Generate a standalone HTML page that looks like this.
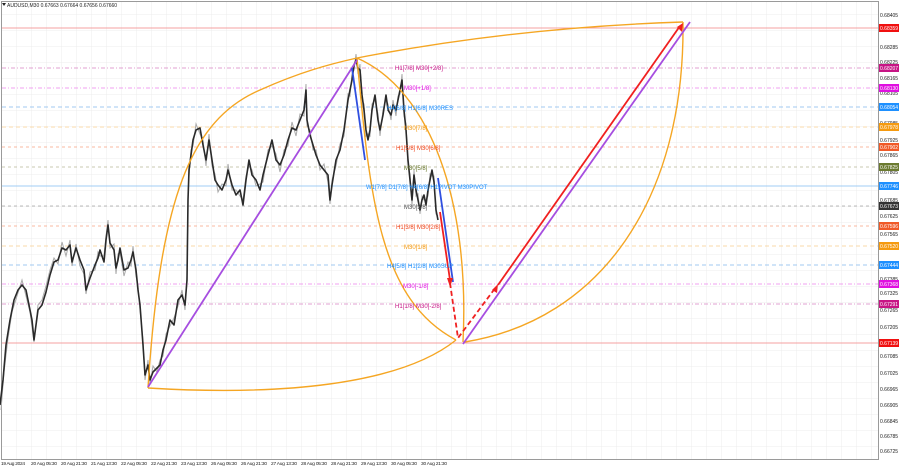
<!DOCTYPE html>
<html><head><meta charset="utf-8"><style>
body{margin:0;width:900px;height:468px;background:#fff;overflow:hidden;font-family:"Liberation Sans",sans-serif}
svg{position:absolute;left:0;top:0}
</style></head><body>
<svg width="900" height="468" viewBox="0 0 900 468" font-family="Liberation Sans, sans-serif">
<defs>
<pattern id="g" x="2" y="-1" width="15" height="16" patternUnits="userSpaceOnUse">
<path d="M15 0V16M0 16H15" stroke="#ececec" stroke-width="1" fill="none"/>
</pattern>
</defs>
<rect x="2" y="2" width="876" height="457" fill="url(#g)"/>
<rect x="1.5" y="1.5" width="877" height="458" fill="none" stroke="#9a9a9a"/>
<g stroke-width="1" fill="none">
<line x1="2" y1="28" x2="878" y2="28" stroke="#f5a0a0"/>
<line x1="2" y1="68" x2="878" y2="68" stroke="#e0a0d0" stroke-dasharray="4 2 1 2"/>
<line x1="2" y1="88" x2="878" y2="88" stroke="#f0a0f0" stroke-dasharray="4 2 1 2"/>
<line x1="2" y1="107" x2="878" y2="107" stroke="#a0c8f0" stroke-dasharray="4 3"/>
<line x1="2" y1="127" x2="878" y2="127" stroke="#f8d8a8" stroke-dasharray="4 3"/>
<line x1="2" y1="147" x2="878" y2="147" stroke="#f8b8a0" stroke-dasharray="3 3"/>
<line x1="2" y1="167" x2="878" y2="167" stroke="#c8c8b0" stroke-dasharray="3 3"/>
<line x1="2" y1="186" x2="878" y2="186" stroke="#a0ccf4"/>
<line x1="2" y1="206" x2="878" y2="206" stroke="#bbbbbb" stroke-dasharray="3 3"/>
<line x1="2" y1="226" x2="878" y2="226" stroke="#f8b8a0" stroke-dasharray="3 3"/>
<line x1="2" y1="246" x2="878" y2="246" stroke="#f8d8a8" stroke-dasharray="4 3"/>
<line x1="2" y1="265" x2="878" y2="265" stroke="#a0c8f0" stroke-dasharray="4 3"/>
<line x1="2" y1="284" x2="878" y2="284" stroke="#f0a0f0" stroke-dasharray="4 2 1 2"/>
<line x1="2" y1="304" x2="878" y2="304" stroke="#e0a0d0" stroke-dasharray="4 2 1 2"/>
<line x1="2" y1="343" x2="878" y2="343" stroke="#f5a0a0"/>
</g>
<polyline fill="none" stroke="#aaa" stroke-width="1" points="1,410 4,372 8,338 12,312 17,296 22,280 26,296 30,312 34,342 38,305 42,300 46,286 50,270 54,258 58,264 62,242 66,256 70,240 72,266 76,244 80,266 84,274 86,294 90,272 95,270 98,252 100,256 104,256 106,236 108,220 110,248 114,244 116,274 118,254 120,252 124,276 128,262 131,266 133,246 136,276 138,286 140,310 143,340 145,380 148,360 150,384 153,366 157,372 160,360 163,356 166,334 170,326 174,318 178,306 182,290 185,310 187,276 188,195 189,176 191,150 193,146 196,124 200,134 203,140 206,166 209,134 212,166 215,174 218,192 222,184 226,186 228,164 232,190 236,190 240,196 243,200 246,176 249,166 252,170 256,186 260,184 263,182 268,150 272,146 276,154 280,172 284,150 288,146 292,122 296,136 300,114 304,116 306,84 307,126 310,130 313,150 316,150 320,170 324,164 328,182 330,204 332,180 336,166 340,144 344,136 348,94 350,96 352,74 354,70 356,54 358,74 360,64 362,100 364,104 366,136 368,134 370,136 372,104 375,100 378,114 380,136 383,110 386,100 388,104 391,120 393,100 396,116 398,96 400,94 402,74 404,116 406,124 408,166 410,174 412,206 414,170 416,196 418,194 420,214 422,196 424,200 426,200 428,196 430,174 432,176 434,176 436,214 438,216"/>
<polyline fill="none" stroke="#2a2a2a" stroke-width="1.6" stroke-linejoin="round" points="0,405 3,380 6,345 10,320 14,300 18,290 22,285 26,290 28,300 32,320 34,340 38,310 42,305 46,292 50,275 54,262 58,260 62,248 66,250 70,245 72,262 76,248 80,260 84,270 86,290 90,278 95,265 98,258 100,250 104,262 106,240 108,225 110,243 114,250 116,268 118,260 120,248 124,270 128,268 131,260 133,252 136,270 138,290 140,305 143,345 145,375 148,365 150,380 153,372 157,368 160,365 163,350 166,340 170,320 174,325 178,300 182,295 185,305 187,280 188,200 189,170 191,155 193,140 196,130 200,128 203,145 206,160 209,140 212,160 215,180 218,185 222,190 226,180 228,170 232,185 236,195 240,190 243,205 246,180 249,160 252,175 256,180 260,190 263,175 268,155 272,140 276,160 280,165 284,155 288,140 292,128 296,130 300,120 304,110 306,90 307,120 310,135 313,145 316,155 320,165 324,170 328,175 330,200 332,185 336,160 340,150 344,130 348,100 350,90 352,80 354,65 356,60 358,68 360,70 362,95 364,110 366,130 368,140 370,130 372,110 375,95 378,120 380,130 383,115 386,95 388,110 391,115 393,105 396,110 398,100 400,90 402,80 404,110 406,130 408,160 410,180 412,200 414,175 416,190 418,200 420,210 422,200 424,195 426,205 428,190 430,180 432,170 434,182 436,210 438,220"/>
<g fill="none" stroke-width="1.4">
<path d="M148,388 C160,200 190,120 260,90 C300,72 330,64 357,58" stroke="#f5a623"/>
<path d="M357,58 C450,40 560,26 683,22" stroke="#f5a623"/>
<path d="M683,22 C685,200 600,320 465,342" stroke="#f5a623"/>
<path d="M148,388 C280,396 400,385 456,340" stroke="#f5a623"/>
<path d="M357,58 C370,200 380,300 456,340" stroke="#f5a623"/>
<path d="M357,58 C430,90 470,200 463,342" stroke="#f5a623"/>
<line x1="148" y1="387" x2="357" y2="60" stroke="#a64ee0" stroke-width="1.8"/>
<line x1="463" y1="344" x2="690" y2="22" stroke="#a64ee0" stroke-width="1.8"/>
<line x1="352" y1="68" x2="365" y2="160" stroke="#3050e0" stroke-width="1.8"/>
<line x1="438" y1="178" x2="453" y2="282" stroke="#3050e0" stroke-width="1.8"/>
<line x1="440" y1="212" x2="450" y2="280" stroke="#f02020" stroke-width="1.8"/>
<path d="M450,283 L458,338 L496,287" stroke="#f02020" stroke-width="1.8" stroke-dasharray="5 3"/>
<line x1="498" y1="285" x2="680" y2="26" stroke="#f02020" stroke-width="1.8"/>
</g>
<g fill="#f02020">
<path d="M447,278 L453,278 L450,287Z"/>
<path d="M492,290 L498,284 L497,293Z"/>
<path d="M677,27 L683,23 L682,32Z"/>
</g>
<g font-size="6">
<text x="395" y="70" fill="#c71585">H1[7/8] M30[+2/8]</text>
<text x="404" y="90" fill="#e010e0">M30[+1/8]</text>
<text x="387" y="110" fill="#1e90ff">H4[6/8] H1[6/8] M30RES</text>
<text x="404" y="130" fill="#f59a10">M30[7/8]</text>
<text x="396" y="150" fill="#f04820">H1[5/8] M30[6/8]</text>
<text x="404" y="170" fill="#6b7a30">M30[5/8]</text>
<text x="366" y="189" fill="#1e90ff">W1[7/8] D1[7/8] H4[6/8] H1PIVOT M30PIVOT</text>
<text x="404" y="209" fill="#555">M30[3/8]</text>
<text x="396" y="229" fill="#f04820">H1[3/8] M30[2/8]</text>
<text x="404" y="249" fill="#f59a10">M30[1/8]</text>
<text x="387" y="268" fill="#1e90ff">H4[5/8] H1[2/8] M30SUP</text>
<text x="403" y="288" fill="#e010e0">M30[-1/8]</text>
<text x="395" y="308" fill="#c71585">H1[1/8] M30[-2/8]</text>
</g>
<g font-size="5" fill="#222">
<text x="880" y="17">0.68405</text><text x="880" y="49">0.68285</text><text x="880" y="64">0.68225</text>
<text x="880" y="80">0.68165</text><text x="880" y="95">0.68105</text><text x="880" y="125">0.67985</text>
<text x="880" y="142">0.67925</text><text x="880" y="157">0.67865</text><text x="880" y="174">0.67805</text>
<text x="880" y="202">0.67685</text><text x="880" y="218">0.67625</text><text x="880" y="236">0.67565</text>
<text x="880" y="281">0.67385</text><text x="880" y="295">0.67325</text><text x="880" y="312">0.67265</text>
<text x="880" y="329">0.67205</text><text x="880" y="358">0.67085</text><text x="880" y="375">0.67025</text>
<text x="880" y="391">0.66965</text><text x="880" y="407">0.66905</text><text x="880" y="423">0.66845</text>
<text x="880" y="438">0.66785</text><text x="880" y="453">0.66725</text>
</g>
<g font-size="5" fill="#fff">
<rect x="879" y="24" width="20" height="8" fill="#f01010"/><text x="880" y="30">0.68359</text>
<rect x="879" y="64" width="20" height="8" fill="#c71585"/><text x="880" y="70">0.68207</text>
<rect x="879" y="84" width="20" height="8" fill="#e010e0"/><text x="880" y="90">0.68130</text>
<rect x="879" y="103" width="20" height="8" fill="#1e90ff"/><text x="880" y="109">0.68054</text>
<rect x="879" y="123" width="20" height="8" fill="#f59a10"/><text x="880" y="129">0.67978</text>
<rect x="879" y="143" width="20" height="8" fill="#f05a28"/><text x="880" y="149">0.67902</text>
<rect x="879" y="163" width="20" height="8" fill="#6b7a30"/><text x="880" y="169">0.67825</text>
<rect x="879" y="182" width="20" height="8" fill="#1e90ff"/><text x="880" y="188">0.67746</text>
<rect x="879" y="202" width="20" height="8" fill="#333"/><text x="880" y="208">0.67673</text>
<rect x="879" y="222" width="20" height="8" fill="#f05a28"/><text x="880" y="228">0.67596</text>
<rect x="879" y="242" width="20" height="8" fill="#f59a10"/><text x="880" y="248">0.67520</text>
<rect x="879" y="261" width="20" height="8" fill="#1e90ff"/><text x="880" y="267">0.67444</text>
<rect x="879" y="280" width="20" height="8" fill="#e010e0"/><text x="880" y="286">0.67368</text>
<rect x="879" y="300" width="20" height="8" fill="#c71585"/><text x="880" y="306">0.67291</text>
<rect x="879" y="339" width="20" height="8" fill="#f01010"/><text x="880" y="345">0.67139</text>
</g>
<g font-size="4.8" fill="#222">
<text x="1" y="465" textLength="24">19 Aug 2024</text><text x="31" y="465" textLength="26">20 Aug 05:30</text><text x="61" y="465" textLength="26">20 Aug 21:30</text>
<text x="91" y="465" textLength="26">21 Aug 13:30</text><text x="121" y="465" textLength="26">22 Aug 05:30</text><text x="151" y="465" textLength="26">22 Aug 21:30</text>
<text x="181" y="465" textLength="26">23 Aug 13:30</text><text x="211" y="465" textLength="26">26 Aug 05:30</text><text x="241" y="465" textLength="26">26 Aug 21:30</text>
<text x="271" y="465" textLength="26">27 Aug 13:30</text><text x="301" y="465" textLength="26">28 Aug 05:30</text><text x="331" y="465" textLength="26">28 Aug 21:30</text>
<text x="361" y="465" textLength="26">29 Aug 13:30</text><text x="391" y="465" textLength="26">30 Aug 05:30</text><text x="421" y="465" textLength="26">30 Aug 21:30</text>
</g>
<path d="M2,3 L6,3 L4,6Z" fill="#222"/>
<text x="7" y="7" font-size="5" fill="#222">AUDUSD,M30  0.67663 0.67664 0.67656 0.67660</text>
</svg>
</body></html>
